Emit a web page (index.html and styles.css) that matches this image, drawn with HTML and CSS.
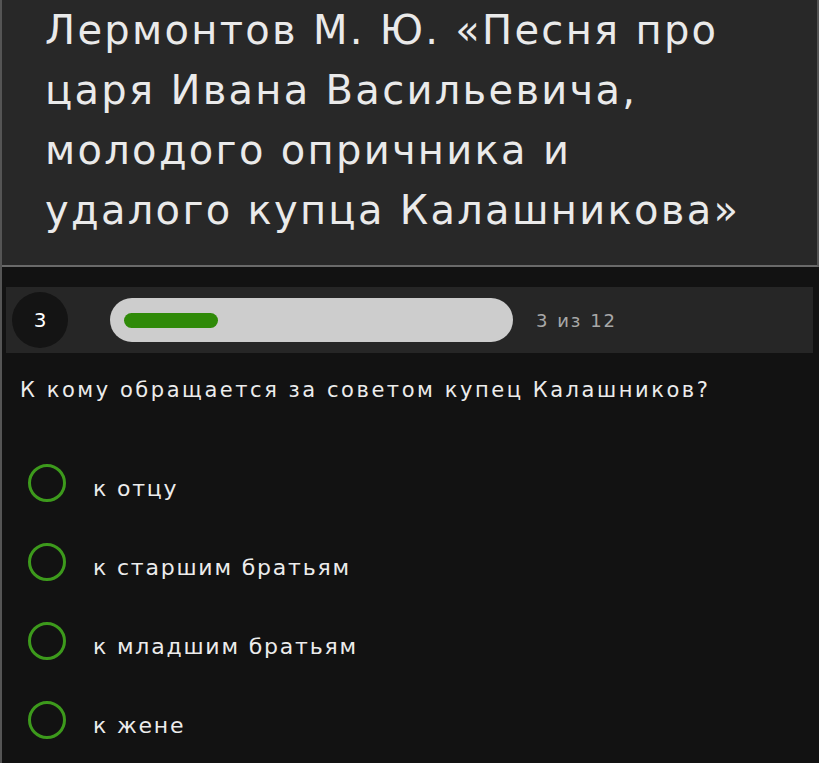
FILE: index.html
```html
<!DOCTYPE html>
<html lang="ru">
<head>
  <meta charset="UTF-8" />
  <meta name="viewport" content="width=device-width, initial-scale=1.0"/>
  <title>Тест - Лермонтов</title>
  <link rel="stylesheet" href="styles.css">
</head>
<body>

<div class="page">
  <!-- HEADER -->
  <header class="test-header">
    <h1>Лермонтов М. Ю. «Песня про<br>царя Ивана Васильевича,<br>молодого опричника и<br>удалого купца Калашникова»</h1>
  </header>

  <!-- PROGRESS -->
  <div class="progress-row">
    <div class="step-circle">3</div>
    <div class="progress-track">
      <div class="progress-fill" style="width: 25%"></div>
    </div>
    <span class="progress-label">3 из 12</span>
  </div>

  <!-- QUESTION -->
  <section class="question">
    <p class="question-text">К кому обращается за советом купец Калашников?</p>
    <ul class="answers">
      <li><span class="radio"></span><span class="answer-text">к отцу</span></li>
      <li><span class="radio"></span><span class="answer-text">к старшим братьям</span></li>
      <li><span class="radio"></span><span class="answer-text">к младшим братьям</span></li>
      <li><span class="radio"></span><span class="answer-text">к жене</span></li>
    </ul>
  </section>
</div>

</body>
</html>
```

FILE: styles.css
```css
body {
  margin: 0;
  font-family: 'DejaVu Sans', sans-serif;
  background: #121212;
  color: #ececec;
}

.page {
  border-left: 2px solid #555;
  min-height: 763px;
  box-sizing: border-box;
}

/* Header with the work title */
.test-header {
  background: #282828;
  border-right: 2px solid #555;
  border-bottom: 2px solid #6a6a6a;
  padding: 0 0 25px 43px;
}

.test-header h1 {
  margin: 0;
  font-size: 40px;
  font-weight: normal;
  line-height: 60px;
  letter-spacing: 2.3px;
  color: #eaeaea;
}

/* Progress bar row */
.progress-row {
  display: flex;
  align-items: center;
  background: #262626;
  margin: 20px 6px 0 4px;
  height: 66px;
  padding-left: 6px;
}

.step-circle {
  width: 56px;
  height: 56px;
  border-radius: 50%;
  background: #141414;
  display: flex;
  align-items: center;
  justify-content: center;
  font-size: 20px;
  color: #fff;
}

.progress-track {
  width: 375px;
  height: 44px;
  margin-left: 42px;
  padding: 0 14px;
  border-radius: 22px;
  background: #cdcdcd;
  display: flex;
  align-items: center;
}

.progress-fill {
  height: 15px;
  border-radius: 8px;
  background: #2f8a08;
}

.progress-label {
  margin-left: 23px;
  font-size: 18px;
  color: #a8a8a8;
  letter-spacing: 2px;
}

/* Question and answers */
.question {
  padding: 0 0 0 18px;
}

.question-text {
  margin: 25px 0 0;
  font-size: 21px;
  letter-spacing: 2.55px;
}

.answers {
  list-style: none;
  margin: 41px 0 0;
  padding: 0 0 0 8px;
}

.answers li {
  display: flex;
  align-items: center;
  height: 79px;
}

.radio {
  width: 32px;
  height: 32px;
  border: 3px solid #3d9a1c;
  border-radius: 50%;
  flex-shrink: 0;
}

.answer-text {
  margin-left: 27px;
  padding-top: 12px;
  font-size: 22px;
  letter-spacing: 1.8px;
}
```
